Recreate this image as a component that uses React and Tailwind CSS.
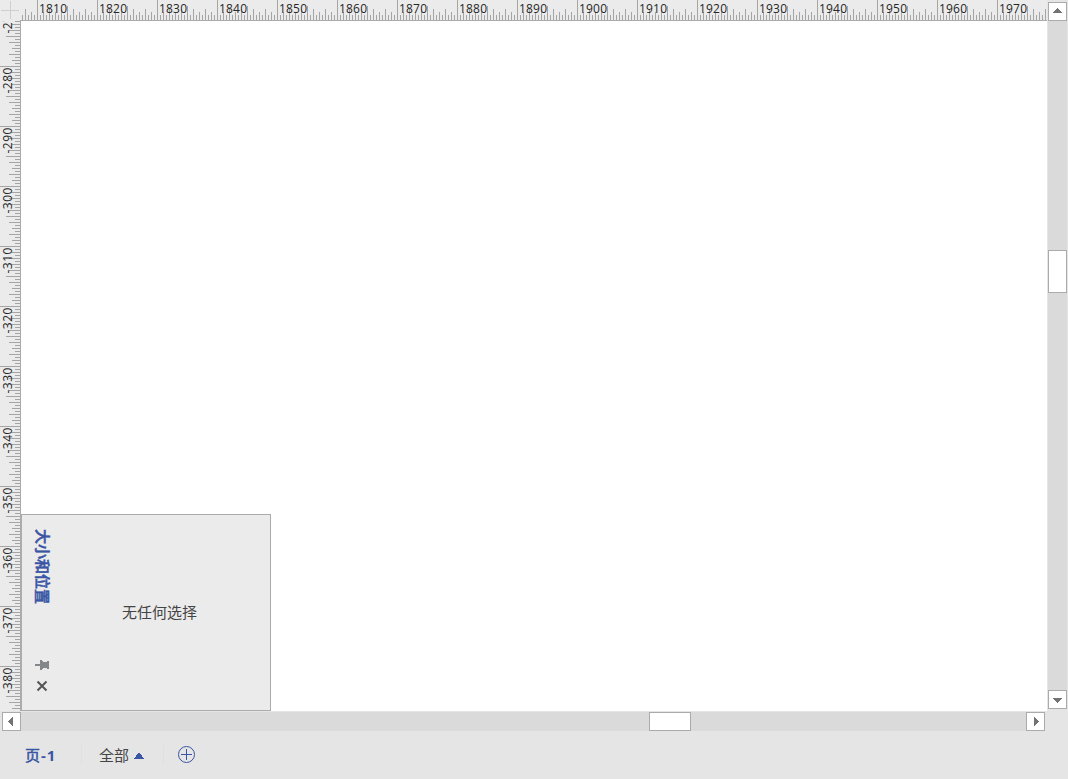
import React from "react";
import { clsx } from "clsx";

const UNIT = 60;
const STEP = 3;

// distance of a tick's tip from the outer edge of the ruler
function tickStart(n) {
    if (n === 0) return 0;
    if (n === 10) return 6;
    if (n % 4 === 0) return 9;
    if (n % 2 === 0) return 12;
    return 15;
}

function makeTicks(origin, from, to) {
    const ticks = [];
    for (let i = 0; origin + i * STEP < to; i++) {
        const pos = origin + i * STEP;
        if (pos >= from) {
            ticks.push({ pos, start: tickStart(i % (UNIT / STEP)) });
        }
    }
    return ticks;
}

const H_TICKS = makeTicks(-23, 22, 1047);
const V_TICKS = makeTicks(6, 21, 711);
const H_LABELS = Array.from({ length: 17 }, (_, i) => 1810 + i * 10);
const V_LABELS = Array.from({ length: 12 }, (_, i) => -270 - i * 10);

function HorizontalRuler() {
    return (
        <svg width="1026" height="21" viewBox="21 0 1026 21" className="block bg-[#ebebeb]">
            {H_TICKS.map(({ pos, start }) => (
                <rect key={pos} x={pos} y={start} width="1" height={20 - start} fill="#a5a5a5" />
            ))}
            <rect x="20" y="20" width="1027" height="1" fill="#ababab" />
            {H_LABELS.map((label, i) => (
                <text key={label} x={39 + i * UNIT} y="13" textLength="28" className="fill-[#262626] text-[12px]">
                    {label}
                </text>
            ))}
        </svg>
    );
}

function VerticalRuler() {
    return (
        <svg width="21" height="690" viewBox="0 21 21 690" className="block shrink-0 bg-[#ebebeb]">
            {V_TICKS.map(({ pos, start }) => (
                <rect key={pos} x={start} y={pos} width={20 - start} height="1" fill="#a5a5a5" />
            ))}
            <rect x="20" y="21" width="1" height="690" fill="#ababab" />
            {V_LABELS.map((label, i) => (
                <text
                    key={label}
                    transform={`translate(12 ${33.5 + i * UNIT}) rotate(-90)`}
                    textLength="26"
                    className="fill-[#262626] text-[12px]"
                >
                    {label}
                </text>
            ))}
        </svg>
    );
}

const ARROWS = {
    up: "M5 11h9v-1h-1v-1h-1v-1h-1v-1h-1v-1h-1v1h-1v1h-1v1h-1v1h-1z",
    down: "M5 8h9v1h-1v1h-1v1h-1v1h-1v1h-1v-1h-1v-1h-1v-1h-1v-1h-1z",
    left: "M11 5v9h-1v-1h-1v-1h-1v-1h-1v-1h-1v-1h1v-1h1v-1h1v-1h1v-1z",
    right: "M8 5v9h1v-1h1v-1h1v-1h1v-1h1v-1h-1v-1h-1v-1h-1v-1h-1v-1z",
};

function ScrollButton({ direction, className }) {
    return (
        <button
            type="button"
            aria-label={direction}
            className={clsx("size-[19px] shrink-0 border border-[#ababab] bg-white", className)}
        >
            <svg width="19" height="19" className="-m-px block" shapeRendering="crispEdges">
                <path d={ARROWS[direction]} fill="#737373" />
            </svg>
        </button>
    );
}

function SizePositionPanel() {
    return (
        <div className="flex h-[197px] w-[250px] border border-[#ababab] bg-[#ebebeb]">
            <div className="flex w-10 flex-col items-center pt-[14px]">
                <span className="h-[76px] text-[15px] leading-[15px] font-medium text-[#3955a3] [-webkit-text-stroke:0.5px_#3955a3] [text-orientation:sideways] [writing-mode:vertical-rl]">
                    大小和位置
                </span>
                <svg width="14" height="10" className="mt-[55px] block" shapeRendering="crispEdges">
                    <path d="M0 4h5V0h2v1h1v1h4V1h2v8h-2V8H8v1H7v1H5V6H0z" fill="#84878a" />
                </svg>
                <svg width="12" height="12" viewBox="0 0 12 12" className="mt-[10px] block">
                    <path d="M1.5 1.5 10.5 10.5M10.5 1.5 1.5 10.5" stroke="#555" strokeWidth="2" />
                </svg>
            </div>
            <div className="flex flex-1 items-center pl-[60px] text-[15px] text-[#444]">
                无任何选择
            </div>
        </div>
    );
}

function PageTabs() {
    return (
        <div className="flex h-12 items-center text-[15px] text-[#444]">
            <div className="flex h-5 w-[82px] items-center border-r border-[#e0e0e0] pl-[25px] text-[#3955a3]">
                <span className="[-webkit-text-stroke:0.5px_#3955a3]">页</span>
                <span className="pl-px text-[15px] font-bold tracking-[0.8px]">-1</span>
            </div>
            <div className="flex h-5 w-[82px] items-center border-r border-[#e0e0e0] pl-[17px]">
                全部
                <svg width="10" height="6" className="mt-px ml-[5px]" shapeRendering="crispEdges">
                    <path d="M4 0h2v1h1v1h1v2h1v1h1v1H0V5h1V4h1V2h1V1h1z" fill="#3955a3" />
                </svg>
            </div>
            <svg width="18" height="18" viewBox="0 0 18 18" className="ml-[14px] block" fill="none" stroke="#3955a3">
                <circle cx="8.5" cy="8.5" r="8" />
                <path d="M3 8.5h11M8.5 3v11" />
            </svg>
        </div>
    );
}

export default function App() {
    return (
        <div className="h-[779px] w-[1068px] overflow-hidden bg-[#e5e5e5] font-['Open_Sans','Noto_Sans_CJK_SC',sans-serif]">
            <div className="flex h-[711px]">
                <div className="w-[1047px]">
                    <div className="flex h-[21px]">
                        <svg width="21" height="21" className="block shrink-0 bg-[#ebebeb]">
                            <path d="M1 10.5h18M10.5 1v18" stroke="#cfcfcf" />
                            <path d="M20 20.5h1" stroke="#ababab" />
                        </svg>
                        <HorizontalRuler />
                    </div>
                    <div className="flex h-[690px]">
                        <VerticalRuler />
                        <div className="flex flex-1 flex-col justify-end bg-white">
                            <SizePositionPanel />
                        </div>
                    </div>
                </div>
                <div className="flex w-[21px] flex-col items-center pt-[2px] pb-[2px]">
                    <ScrollButton direction="up" />
                    <div className="w-[19px] flex-1 bg-[#dadada] pt-[229px]">
                        <div className="h-[43px] border border-[#ababab] bg-white" />
                    </div>
                    <ScrollButton direction="down" />
                </div>
            </div>
            <div className="flex h-5 w-[1047px] items-start pt-px pr-[2px] pl-[2px]">
                <ScrollButton direction="left" />
                <div className="h-[19px] flex-1 bg-[#dadada] pl-[628px]">
                    <div className="h-[19px] w-[42px] border border-[#ababab] bg-white" />
                </div>
                <ScrollButton direction="right" />
            </div>
            <PageTabs />
        </div>
    );
}
